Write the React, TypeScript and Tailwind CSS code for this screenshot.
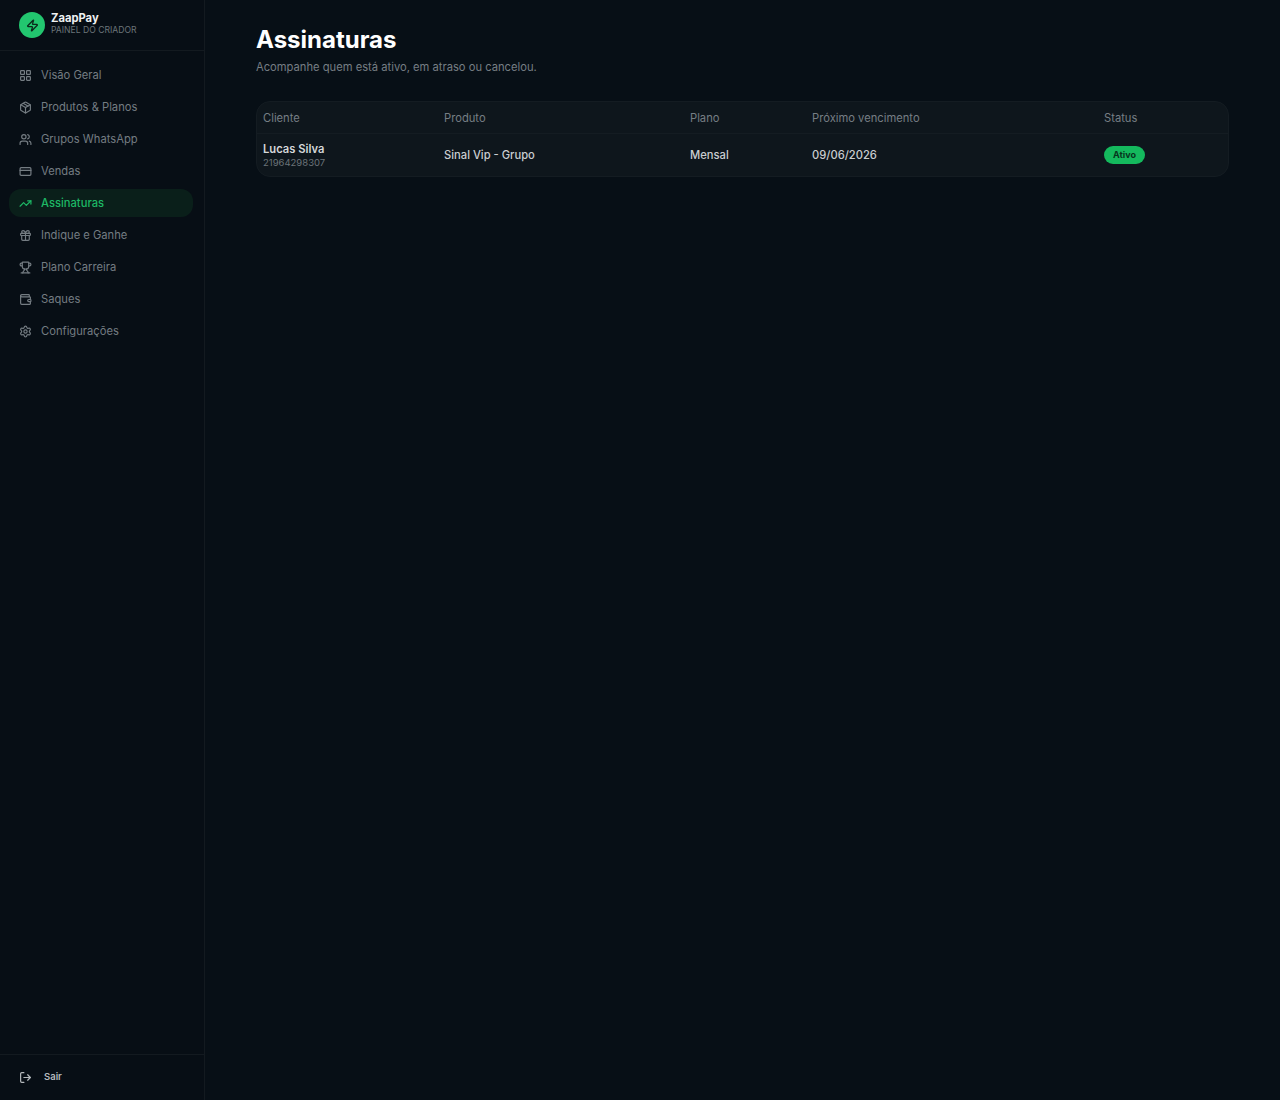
import { CreditCard, Gift, LayoutGrid, LogOut, Package, Settings, TrendingUp, Trophy, Users, Wallet, Zap } from 'lucide-react'

const navItems = [
  { label: 'Visão Geral', icon: LayoutGrid },
  { label: 'Produtos & Planos', icon: Package },
  { label: 'Grupos WhatsApp', icon: Users },
  { label: 'Vendas', icon: CreditCard },
  { label: 'Assinaturas', icon: TrendingUp, active: true },
  { label: 'Indique e Ganhe', icon: Gift },
  { label: 'Plano Carreira', icon: Trophy },
  { label: 'Saques', icon: Wallet },
  { label: 'Configurações', icon: Settings },
]

const gridCols = 'grid grid-cols-[181px_246px_122px_292px_1fr] px-[6px]'

export default function App() {
  return (
    <div className="flex h-[1100px] overflow-hidden bg-[#070f16] font-['Inter',sans-serif]">
      <aside className="flex w-[205px] shrink-0 flex-col border-r border-[#131a20] bg-[#070e15]">
        <div className="flex h-[51px] items-center gap-[6px] border-b border-[#131a20] pl-[19px]">
          <div className="flex h-[26px] w-[26px] items-center justify-center rounded-full bg-[#22c66f]">
            <Zap className="h-[13px] w-[13px] text-[#0a2a1c]" strokeWidth={2.4} />
          </div>
          <div>
            <p className="text-[11.2px] leading-[11px] font-bold text-[#eef1f2]">ZaapPay</p>
            <p className="text-[8.6px] leading-[13px] text-[#6b7479]">PAINEL DO CRIADOR</p>
          </div>
        </div>
        <nav className="flex flex-1 flex-col gap-[4px] pt-[10px] pr-[11px] pl-[9px]">
          {navItems.map(({ label, icon: Icon, active }) => (
            <a
              key={label}
              className={`flex h-[28px] items-center gap-[9px] rounded-[12px] pl-[10px] text-[11.2px] ${
                active ? 'bg-[#0a1f1a] font-medium text-[#1db865]' : 'text-[#747c82]'
              }`}
            >
              <Icon className="h-[13px] w-[13px] shrink-0" strokeWidth={2.2} />
              {label}
            </a>
          ))}
        </nav>
        <div className="flex h-[46px] items-center gap-[12px] border-t border-[#131a20] pl-[19px]">
          <LogOut className="h-[13px] w-[13px] text-[#b4b9bc]" strokeWidth={2.2} />
          <span className="text-[9.5px] font-semibold text-[#b4b9bc]">Sair</span>
        </div>
      </aside>
      <main className="flex-1 px-[51px] pt-[24px]">
        <h1 className="text-[24px] leading-[32px] font-bold text-white">Assinaturas</h1>
        <p className="mt-[3px] text-[11.2px] leading-[16px] text-[#767e84]">Acompanhe quem está ativo, em atraso ou cancelou.</p>
        <div className="mt-[26px] overflow-hidden rounded-[14px] border border-[#141c22] bg-[#0e161c]">
          <div className={`${gridCols} h-[32px] items-center border-b border-[#141c22] pt-[1px] text-[11.2px] text-[#767e84]`}>
            <span>Cliente</span>
            <span>Produto</span>
            <span>Plano</span>
            <span>Próximo vencimento</span>
            <span>Status</span>
          </div>
          <div className={`${gridCols} h-[42px] items-center text-[11.2px] font-medium text-[#c9cdd0]`}>
            <div className="mt-[1px]">
              <p className="leading-[13px] font-semibold text-[#d5d8da]">Lucas Silva</p>
              <p className="text-[9.5px] leading-[13px] font-normal text-[#6b7378]">21964298307</p>
            </div>
            <span>Sinal Vip - Grupo</span>
            <span>Mensal</span>
            <span>09/06/2026</span>
            <span className="-mt-[1px] flex h-[18px] w-[41px] items-center justify-center rounded-full bg-[#14b95d] text-[9px] font-bold text-[#07351d]">Ativo</span>
          </div>
        </div>
      </main>
    </div>
  )
}
